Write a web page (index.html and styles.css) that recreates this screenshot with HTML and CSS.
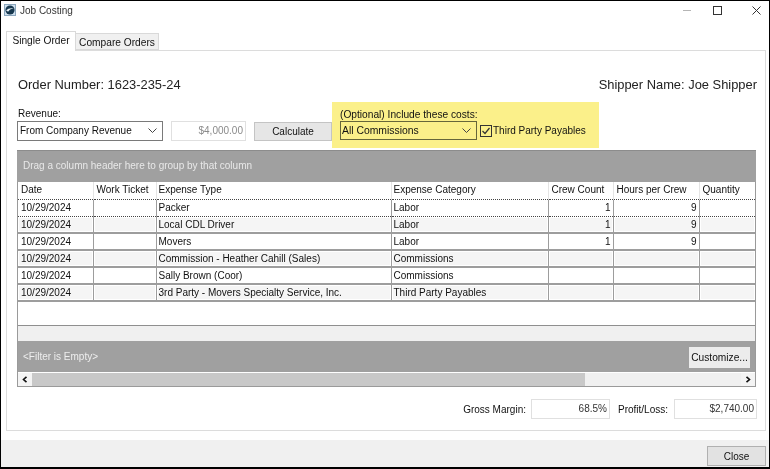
FILE: index.html
```html
<!DOCTYPE html>
<html lang="en">
<head>
<meta charset="utf-8">
<title>Job Costing</title>
<link rel="stylesheet" href="styles.css">
</head>
<body>
<div class="window">
  <header class="titlebar">
    <svg class="app-icon" width="12" height="12" viewBox="0 0 12 12"><rect x="0.5" y="0.5" width="11" height="11" fill="#cfe0ee" stroke="#8aa6bd"/><circle cx="6" cy="6" r="4.6" fill="#17384f"/><path d="M2.2 6.4C4 4.4 7 3.6 9.8 4.6 7.6 4.8 5.4 5.6 4.4 7.6 3.6 7.4 2.8 7 2.2 6.4Z" fill="#e8f0f5"/></svg>
    <span class="title">Job Costing</span>
    <div class="controls">
      <svg width="8" height="1" viewBox="0 0 8 1" class="ctl-min"><rect width="8" height="1" fill="#b5b5b5"/></svg>
      <svg width="9" height="9" viewBox="0 0 9 9" class="ctl-max"><rect x="0.5" y="0.5" width="8" height="8" fill="none" stroke="#333"/></svg>
      <svg width="9" height="9" viewBox="0 0 9 9" class="ctl-close"><path d="M0.5 0.5L8.5 8.5M8.5 0.5L0.5 8.5" stroke="#333" stroke-width="1" fill="none"/></svg>
    </div>
  </header>

  <nav class="tabs">
    <div class="tab tab-active">Single Order</div>
    <div class="tab">Compare Orders</div>
  </nav>

  <main class="panel">
    <div class="order-row">
      <span>Order Number: 1623-235-24</span>
      <span>Shipper Name: Joe Shipper</span>
    </div>

    <div class="filter-row">
      <div class="revenue">
        <label class="small-label">Revenue:</label>
        <div class="revenue-fields">
          <div class="select select-revenue"><span>From Company Revenue</span><svg class="chev" width="9" height="5" viewBox="0 0 9 5"><path d="M0.5 0.5L4.5 4.5L8.5 0.5" fill="none" stroke="#444"/></svg></div>
          <div class="amount amount-disabled">$4,000.00</div>
          <button class="btn btn-calc">Calculate</button>
        </div>
      </div>
      <div class="optional">
        <label class="small-label label-optional">(Optional) Include these costs:</label>
        <div class="optional-fields">
          <div class="select select-costs"><span>All Commissions</span><svg class="chev" width="9" height="5" viewBox="0 0 9 5"><path d="M0.5 0.5L4.5 4.5L8.5 0.5" fill="none" stroke="#444"/></svg></div>
          <svg class="check" width="12" height="12" viewBox="0 0 12 12"><rect x="0.5" y="0.5" width="11" height="11" fill="none" stroke="#333"/><path d="M2.5 6L5 8.5L9.5 3" fill="none" stroke="#333" stroke-width="1.2"/></svg>
          <span>Third Party Payables</span>
        </div>
      </div>
    </div>

    <section class="grid">
      <div class="group-bar">Drag a column header here to group by that column</div>
      <table class="data">
        <colgroup>
          <col class="c1"><col class="c2"><col class="c3"><col class="c4"><col class="c5"><col class="c6"><col class="c7">
        </colgroup>
        <thead>
          <tr><th>Date</th><th>Work Ticket</th><th>Expense Type</th><th>Expense Category</th><th>Crew Count</th><th>Hours per Crew</th><th>Quantity</th></tr>
        </thead>
        <tbody>
          <tr class="focused"><td>10/29/2024</td><td></td><td>Packer</td><td>Labor</td><td class="num">1</td><td class="num">9</td><td></td></tr>
          <tr class="alt"><td>10/29/2024</td><td></td><td>Local CDL Driver</td><td>Labor</td><td class="num">1</td><td class="num">9</td><td></td></tr>
          <tr><td>10/29/2024</td><td></td><td>Movers</td><td>Labor</td><td class="num">1</td><td class="num">9</td><td></td></tr>
          <tr class="alt"><td>10/29/2024</td><td></td><td>Commission - Heather Cahill (Sales)</td><td>Commissions</td><td></td><td></td><td></td></tr>
          <tr><td>10/29/2024</td><td></td><td>Sally Brown (Coor)</td><td>Commissions</td><td></td><td></td><td></td></tr>
          <tr class="alt"><td>10/29/2024</td><td></td><td>3rd Party - Movers Specialty Service, Inc.</td><td>Third Party Payables</td><td></td><td></td><td></td></tr>
        </tbody>
      </table>
      <div class="grid-empty"></div>
      <div class="summary-row"></div>
      <div class="filter-bar">
        <span>&lt;Filter is Empty&gt;</span>
        <button class="btn-customize">Customize...</button>
      </div>
      <div class="scrollbar">
        <div class="arrow"><svg width="6" height="7" viewBox="0 0 6 7"><path d="M4.5 0.8L1.5 3.5L4.5 6.2" fill="none" stroke="#111" stroke-width="1.6"/></svg></div>
        <div class="thumb"></div>
        <div class="track"></div>
        <div class="arrow"><svg width="6" height="7" viewBox="0 0 6 7"><path d="M1.5 0.8L4.5 3.5L1.5 6.2" fill="none" stroke="#111" stroke-width="1.6"/></svg></div>
      </div>
    </section>

    <div class="totals">
      <span>Gross Margin:</span>
      <div class="amount amount-margin">68.5%</div>
      <span class="label-profit">Profit/Loss:</span>
      <div class="amount amount-profit">$2,740.00</div>
    </div>
  </main>

  <footer class="footer">
    <button class="btn btn-close">Close</button>
  </footer>
</div>
</body>
</html>
```
FILE: styles.css
```css
* { box-sizing: border-box; }
html, body { margin: 0; padding: 0; background: #fff; }
body { font-family: "Liberation Sans", Arial, sans-serif; font-size: 10px; color: #111; }

.window {
  width: 770px; height: 469px;
  display: flex; flex-direction: column;
  background: #fff;
  border-style: solid; border-color: #000;
  border-width: 1px 1px 2px 1px;
  overflow: hidden;
  filter: blur(0.3px);
}

.titlebar { height: 18px; display: flex; align-items: center; padding: 0 8px 2px 3px; margin-top: 1px; flex: none; }
.app-icon { flex: none; }
.title { margin-left: 4px; font-size: 10px; color: #333; }
.controls { margin-left: auto; display: flex; align-items: center; }
.ctl-min { margin-right: 22px; }
.ctl-max { margin-right: 30px; }

.tabs { display: flex; align-items: flex-end; padding-left: 5px; flex: none; position: relative; z-index: 1; height: 30px; padding-top: 10px; }
.tab { height: 17px; padding: 3px 0 0; background: #f0f0f0; border: 1px solid #d9d9d9; border-left: 0; border-bottom: 1px solid #d9d9d9; font-size: 10.2px; width: 83px; text-align: center; white-space: nowrap; }
.tab-active { height: 20px; width: 70px; background: #fff; border-left: 1px solid #d9d9d9; border-bottom: 0; padding-top: 3px; margin-bottom: -1px; }

.panel {
  width: 760px; height: 381px; margin-left: 5px; flex: none;
  border: 1px solid #dcdcdc;
  padding: 0 8px 0 11px;
  display: flex; flex-direction: column;
}

.order-row { display: flex; justify-content: space-between; font-size: 12.9px; line-height: 16px; margin-top: 26px; color: #222; }

.filter-row { display: flex; align-items: flex-start; margin-top: 9px; height: 46px; margin-left: -1px; }
.small-label { display: block; font-size: 10px; line-height: 13px; }
.label-optional { font-size: 10.2px; }
.revenue { padding-top: 5px; padding-left: 1px; width: 315px; flex: none; }
.revenue-fields { display: flex; align-items: flex-start; margin-left: -1px; margin-top: 1px; }
.select { display: flex; align-items: center; justify-content: space-between; height: 20px; border: 1px solid #7a7a7a; padding: 0 5px 2px 2px; background: #fff; font-size: 10px; }
.select-revenue { width: 146px; }
.amount { height: 20px; border: 1px solid #e0e0e0; padding: 0 2px 1px 0; text-align: right; line-height: 17px; background: #fff; font-size: 10px; }
.amount-disabled { width: 75px; margin-left: 8px; color: #8a8a8a; }
.btn { border: 1px solid #c4c4c4; background: #e6e6e6; font: inherit; font-size: 10px; color: #111; padding: 0 0 1px; }
.btn-calc { width: 78px; height: 19px; margin-left: 8px; margin-top: 1px; }

.optional { width: 267px; height: 46px; background: #fbf08a; padding: 6px 0 0 8px; flex: none; }
.optional-fields { display: flex; align-items: center; }
.select-costs { width: 137px; height: 19px; background: #fbf08a; border-color: #66663a; font-size: 10.4px; padding-bottom: 0; padding-left: 1px; }
.check { margin-left: 3px; margin-right: 1px; }

.grid { margin-top: 2px; margin-left: -1px; width: 739px; height: 237px; flex: none; border: 1px solid #9a9a9a; border-top: 0; display: flex; flex-direction: column; }
.group-bar { height: 32px; margin: 0 -1px; background: #a0a0a0; color: #e8e8e8; padding: 8px 0 0 6px; font-size: 10px; line-height: 13px; border-top: 1px solid #8c8c8c; flex: none; }

.data { width: 737px; table-layout: fixed; border-collapse: collapse; flex: none; font-size: 10px; }
.c1 { width: 75px; } .c2 { width: 63px; } .c3 { width: 235px; } .c4 { width: 157px; }
.c5 { width: 65px; } .c6 { width: 86px; } .c7 { width: 56px; }
.data th { height: 17px; padding: 0 3px 2px 3px; text-align: left; font-weight: normal; border-left: 1px solid #e4e4e4; white-space: nowrap; overflow: hidden; }
.data th:nth-child(3), .data th:nth-child(4) { padding-left: 2px; }
.data td { height: 17px; padding: 0 2px 0 2px; border-bottom: 2px solid #9d9d9d; border-left: 1px solid #9d9d9d; white-space: nowrap; overflow: hidden; line-height: 13px; }
.data th:first-child { border-left: 0; }
.data td:first-child { border-left: 0; padding-left: 3px; }
.data tr.alt td { background: #f5f5f5; box-shadow: inset 0 0 0 1px #fff; }
.data tr.focused td { border-top: 1px dotted #444; border-bottom: 1px dotted #444; }
.data .num { text-align: right; padding-right: 2px; }

.grid-empty { flex: 1; border-bottom: 1px solid #8f8f8f; }
.summary-row { height: 15px; background: #f0f0f0; flex: none; }
.filter-bar { height: 31px; background: #a0a0a0; display: flex; justify-content: space-between; align-items: center; padding: 0 5px 0 5px; flex: none; color: #eee; }
.btn-customize { width: 61px; height: 21px; margin-top: 2px; border: 0; padding: 0; background: #ececec; font: inherit; font-size: 10.2px; color: #111; }
.scrollbar { height: 13px; margin-top: 1px; display: flex; background: #f0f0f0; flex: none; }
.arrow { width: 14px; display: flex; align-items: center; justify-content: center; flex: none; background: #f4f4f4; }
.thumb { width: 553px; background: #c8c8c8; }
.track { flex: 1; }

.totals { display: flex; align-items: center; margin-top: 12px; justify-content: flex-end; font-size: 10px; }
.amount-margin { width: 79px; margin-left: 5px; color: #333; }
.label-profit { margin-left: 8px; }
.amount-profit { width: 83px; margin-left: 6px; color: #333; }

.footer { height: 27px; margin-top: 9px; background: #f0f0f0; display: flex; justify-content: flex-end; align-items: flex-start; padding: 6px 3px 0 0; flex: none; }
.btn-close { width: 59px; height: 20px; padding-bottom: 0; background: #e2e2e2; border-color: #b0b0b0; }
```
